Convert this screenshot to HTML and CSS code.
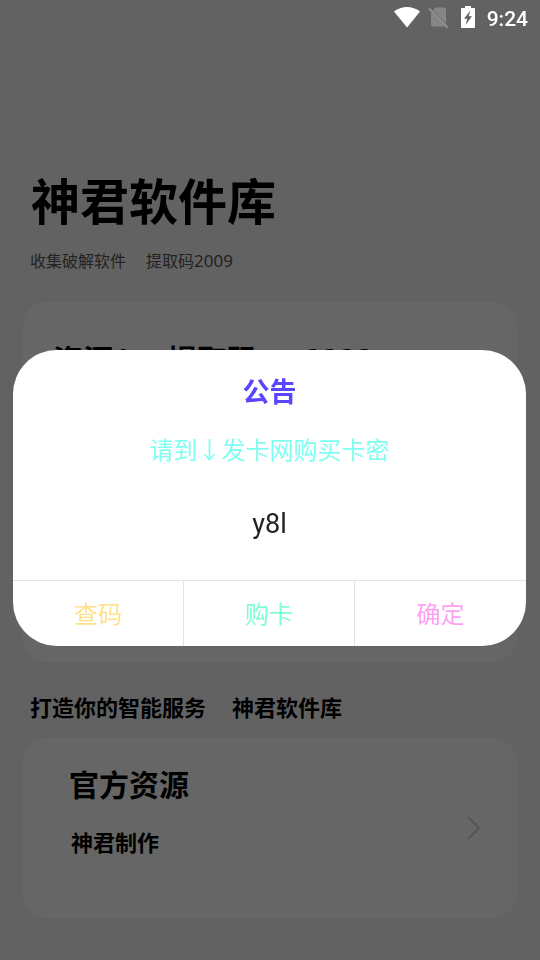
FILE: index.html
```html
<!DOCTYPE html>
<html lang="zh-CN">
<head>
<meta charset="utf-8">
<meta name="viewport" content="width=device-width, initial-scale=1">
<title>神君软件库</title>
<link rel="stylesheet" href="styles.css">
</head>
<body>
<header class="status">
  <svg class="status-wifi" width="28" height="24" viewBox="0 0 28 24" aria-hidden="true"><path d="M1 6.500C8.500 .4 19.500 .4 27 6.500L14 22.500Z" fill="#fff"/></svg>
  <svg class="status-sim" width="22" height="24" viewBox="0 0 22 24" aria-hidden="true"><path d="M8.500 2.500H17a2 2 0 0 1 2 2V18.500L5.800 5.200ZM4 7.200L18 21.500H6a2 2 0 0 1-2-2Z" fill="#868686"/><path d="M2 3.500L20.500 22.500" stroke="#929292" stroke-width="1.800"/></svg>
  <svg class="status-battery" width="14" height="24" viewBox="0 0 14 24" aria-hidden="true"><path d="M4 1H10V3H13Q14 3 14 4V22Q14 23 13 23H1Q0 23 0 22V4Q0 3 1 3H4Z" fill="#fff"/><path d="M9.400 5.500L3 13.800H6.300L4.600 20L11 11.300H7.700Z" fill="#626262"/></svg>
  <span class="clock">9:24</span>
</header>
<main class="page">
  <h1 class="title">神君软件库</h1>
  <p class="subtitle"><span>收集破解软件</span><span>提取码<span class="code">2009</span></span></p>
  <section class="card card-tall">
    <h2 class="resource"><span>资源1</span><span>提取码</span><span>6666</span></h2>
  </section>
  <h2 class="section"><span>打造你的智能服务</span><span>神君软件库</span></h2>
  <a class="card card-link" href="#official">
    <span class="card-text">
      <strong class="card-title">官方资源</strong>
      <strong class="card-note">神君制作</strong>
    </span>
    <svg width="14" height="24" viewBox="0 0 14 24" fill="none" stroke="#d2d2d2" stroke-width="2" stroke-linecap="round" stroke-linejoin="round" aria-hidden="true"><path d="M2 2L12 12L2 22"/></svg>
  </a>
</main>
<div class="overlay">
  <div class="dialog" role="dialog" aria-modal="true" aria-labelledby="notice-title">
    <h2 class="dialog-title" id="notice-title">公告</h2>
    <p class="dialog-message">请到↓发卡网购买卡密</p>
    <p class="dialog-code">y8l</p>
    <div class="actions">
      <button class="action action-check" type="button">查码</button>
      <button class="action action-buy" type="button">购卡</button>
      <button class="action action-ok" type="button">确定</button>
    </div>
  </div>
</div>
</body>
</html>
```
FILE: styles.css
```css
* {
  box-sizing: border-box;
}

body {
  margin: 0;
  min-height: 100vh;
  background: #f5f5f5;
  color: #000;
  font-family: "Noto Sans", "Noto Sans CJK SC", sans-serif;
}

h1, h2, p {
  margin: 0;
  font-weight: 700;
}

.status {
  position: fixed;
  inset: 0 0 auto;
  z-index: 2;
  display: flex;
  align-items: center;
  justify-content: flex-end;
  height: 36px;
  padding: 0 12px 2px 0;
  color: #fff;
}

.status-wifi {
  margin-right: 6px;
}

.status-sim {
  margin-right: 12px;
}

.status-battery {
  margin-right: 12px;
}

.clock {
  padding-top: 3px;
  font: 500 21px/36px Roboto, sans-serif;
}

.page {
  padding: 163px 23px 40px;
}

.title {
  padding-left: 8px;
  font-size: 49px;
  line-height: 76px;
}

.subtitle {
  display: flex;
  gap: 20px;
  padding-left: 7px;
  margin: 9px 0 29px;
  color: #555;
  font-family: "Noto Sans CJK SC", sans-serif;
  font-size: 16px;
  font-weight: 400;
  line-height: 24px;
}

.code {
  font-family: "Noto Sans", sans-serif;
  font-size: 17px;
}

.card {
  border-radius: 24px;
  background: #fff;
}

.card-tall {
  min-height: 360px;
  padding: 36px 30px;
}

.resource {
  display: flex;
  gap: 37px;
  font-size: 30px;
  line-height: 44px;
}

.resource span:last-child {
  padding-left: 7px;
}

.section {
  display: flex;
  gap: 26px;
  padding: 28px 7px 14px;
  font-size: 22px;
  line-height: 34px;
}

.card-link {
  display: flex;
  align-items: center;
  justify-content: space-between;
  min-height: 180px;
  padding: 0 36px 0 46px;
  color: #000;
  text-decoration: none;
}

.card-text {
  display: flex;
  flex-direction: column;
  gap: 18px;
  padding-bottom: 34px;
}

.card-title {
  font-size: 30px;
  line-height: 44px;
}

.card-note {
  padding-left: 2px;
  font-size: 22px;
  line-height: 34px;
}

.overlay {
  position: fixed;
  inset: 0;
  z-index: 1;
  display: flex;
  align-items: center;
  padding: 36px 14px 0 13px;
  background: rgba(0, 0, 0, 0.6);
}

.dialog {
  flex: 1;
  overflow: hidden;
  border-radius: 44px;
  background: #fff;
  text-align: center;
}

.dialog-title {
  padding-top: 22px;
  color: #5a46ff;
  font-size: 27px;
  line-height: 40px;
}

.dialog-message {
  margin-top: 19px;
  color: #7ffff0;
  font-family: "Noto Sans CJK SC", sans-serif;
  font-size: 24px;
  font-weight: 400;
  line-height: 36px;
}

.dialog-code {
  margin: 37px 0 36px;
  color: #222;
  font: 400 27px/40px Roboto, sans-serif;
}

.actions {
  display: grid;
  grid-template-columns: repeat(3, 1fr);
  border-top: 1px solid #e3e3e3;
}

.action {
  height: 65px;
  padding: 0 0 2px;
  border: 0;
  border-right: 1px solid #e3e3e3;
  background: none;
  font-family: "Noto Sans CJK SC", sans-serif;
  font-size: 24px;
}

.action:last-child {
  border-right: 0;
}

.action-check {
  color: #ffe08a;
}

.action-buy {
  color: #7fffd0;
}

.action-ok {
  color: #ff9ff3;
}
```
